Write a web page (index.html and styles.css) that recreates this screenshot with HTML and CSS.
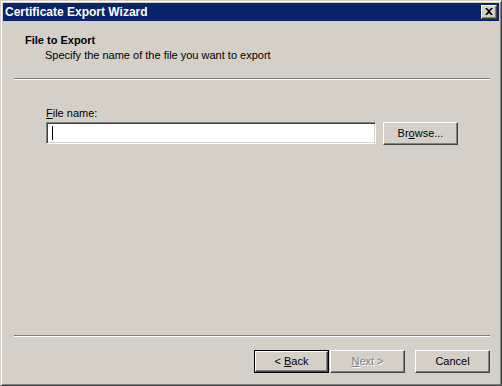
FILE: index.html
```html
<!DOCTYPE html>
<html lang="en">
<head>
  <meta charset="UTF-8" />
  <title>Certificate Export Wizard</title>
  <link rel="stylesheet" href="styles.css">
</head>
<body>
  <div class="window">
    <div class="titlebar">
      <span class="title">Certificate Export Wizard</span>
      <span class="close-btn">
        <svg width="8" height="7" viewBox="0 0 8 7"><path d="M0 0h2l2 2 2-2h2L5 3.5 8 7H6L4 5 2 7H0l3-3.5z" fill="#000"/></svg>
      </span>
    </div>
    <div class="page">
      <div class="page-head">
        <div class="head-title">File to Export</div>
        <div class="head-sub">Specify the name of the file you want to export</div>
      </div>
      <div class="sep head-sep"></div>
      <div class="page-main">
        <label class="field-label"><u>F</u>ile name:</label>
        <div class="field-row">
          <div class="textbox"><span class="caret"></span></div>
          <span class="btn browse">Br<u>o</u>wse...</span>
        </div>
      </div>
      <div class="sep foot-sep"></div>
      <div class="buttons">
        <span class="btn default"><span class="inner">&lt;&nbsp;<u>B</u>ack</span></span>
        <span class="btn disabled"><u>N</u>ext&nbsp;&gt;</span>
        <span class="btn cancel">Cancel</span>
      </div>
    </div>
  </div>
</body>
</html>
```

FILE: styles.css
```css
html, body {
  margin: 0;
  padding: 0;
  background: #d4d0c8;
  font-family: 'Liberation Sans', Arial, sans-serif;
  font-size: 11px;
  color: #000;
}
.window {
  width: 502px;
  height: 386px;
  box-sizing: border-box;
  border: 1px solid;
  border-color: #d4d0c8 #404040 #404040 #d4d0c8;
  box-shadow: inset 1px 1px #fff, inset -1px -1px #808080;
  padding: 2px;
  display: flex;
  flex-direction: column;
}
.titlebar {
  height: 18px;
  background: #0a246a;
  display: flex;
  align-items: center;
  justify-content: space-between;
  padding: 0 2px 0 2px;
}
.title {
  color: #fff;
  font-weight: bold;
  font-size: 12px;
  line-height: 14px;
}
.close-btn {
  width: 14px;
  height: 12px;
  background: #d4d0c8;
  border: 1px solid;
  border-color: #fff #404040 #404040 #fff;
  box-shadow: inset -1px -1px #808080;
  display: flex;
  align-items: center;
  justify-content: center;
}
.close-btn svg {
  margin: 0 1px 1px 0;
}
.page {
  flex: 1;
  display: flex;
  flex-direction: column;
}
.page-head {
  padding: 13px 0 0 22px;
}
.head-title {
  font-weight: bold;
  line-height: 13px;
}
.head-sub {
  margin: 2px 0 0 20px;
  line-height: 13px;
}
.sep {
  height: 1px;
  background: #808080;
  border-bottom: 1px solid #fff;
  margin: 0 9px 0 11px;
}
.head-sep {
  margin-top: 16px;
}
.page-main {
  flex: 1;
  padding: 27px 0 0 43px;
}
.field-label {
  display: block;
  line-height: 13px;
}
.field-row {
  display: flex;
  gap: 7px;
  margin-top: 2px;
}
.textbox {
  width: 323px;
  height: 18px;
  background: #fff;
  border: 1px solid;
  border-color: #808080 #fff #fff #808080;
  box-shadow: inset 1px 1px #404040, inset -1px -1px #d4d0c8;
  padding: 2px 0 0 5px;
}
.caret {
  display: block;
  width: 1px;
  height: 14px;
  background: #000;
  margin-top: 1px;
}
.btn {
  width: 73px;
  height: 21px;
  box-sizing: content-box;
  border: 1px solid;
  border-color: #fff #404040 #404040 #fff;
  box-shadow: inset -1px -1px #808080;
  display: flex;
  align-items: center;
  justify-content: center;
  line-height: 13px;
}
.buttons {
  display: flex;
  justify-content: flex-end;
  padding: 13px 9px 10px 0;
}
.btn.default {
  border: 1px solid #000;
  box-shadow: none;
}
.btn.default .inner {
  flex: 1;
  align-self: stretch;
  display: flex;
  align-items: center;
  justify-content: center;
  border: 1px solid;
  border-color: #fff #404040 #404040 #fff;
  box-shadow: inset -1px -1px #808080;
}
.btn.disabled {
  margin-left: 1px;
  color: #808080;
  text-shadow: 1px 1px #fff;
}
.btn.cancel {
  margin-left: 10px;
}
```
